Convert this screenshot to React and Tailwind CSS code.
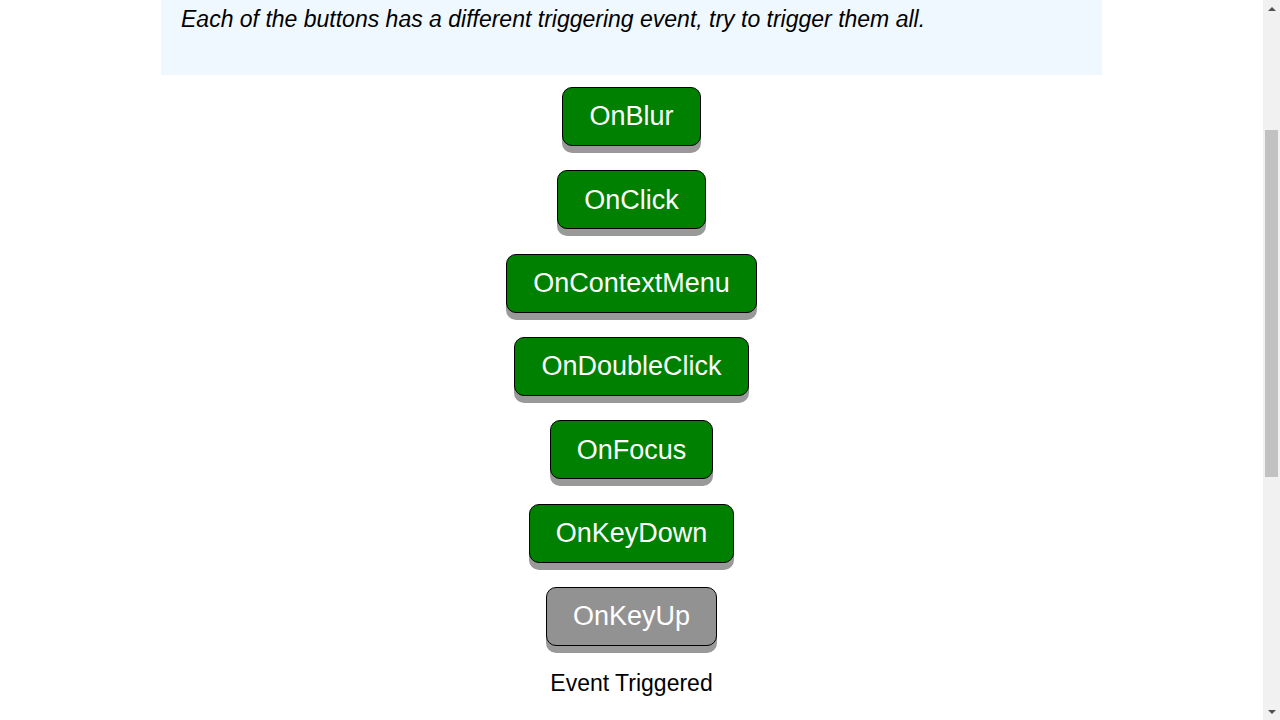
import React, { useState } from 'react';

const events = ['OnBlur', 'OnClick', 'OnContextMenu', 'OnDoubleClick', 'OnFocus', 'OnKeyDown', 'OnKeyUp'];

function Scrollbar() {
  return (
    <div className="fixed right-0 top-0 w-[17px] h-screen bg-[#f1f1f1] flex flex-col items-center">
      <div className="h-[17px] flex items-center justify-center">
        <div className="w-0 h-0 border-l-[4px] border-r-[4px] border-b-[4px] border-l-transparent border-r-transparent border-b-[#505050]" />
      </div>
      <div className="flex-1 w-full px-[2px] pt-[113px]">
        <div className="h-[347px] w-full bg-[#c1c1c1]" />
      </div>
      <div className="h-[17px] flex items-center justify-center">
        <div className="w-0 h-0 border-l-[4px] border-r-[4px] border-t-[4px] border-l-transparent border-r-transparent border-t-[#505050]" />
      </div>
    </div>
  );
}

export default function App() {
  const [triggered, setTriggered] = useState({ OnKeyUp: true });

  const fire = (name) => setTriggered((t) => ({ ...t, [name]: true }));

  return (
    <div className="min-h-screen bg-white text-black font-['Liberation_Sans',Arial,sans-serif]">
      <div className="w-[1263px]">
        <div className="w-[941px] mx-auto bg-[#f0f8ff] px-5 pb-[36px] -mt-[1px]">
          <p className="text-[23px] italic leading-[40px]">
            Each of the buttons has a different triggering event, try to trigger them all.
          </p>
        </div>

        <div className="flex flex-col items-center pt-[12px]">
          {events.map((name) => (
            <button
              key={name}
              onBlur={name === 'OnBlur' ? () => fire(name) : undefined}
              onClick={name === 'OnClick' ? () => fire(name) : undefined}
              onContextMenu={name === 'OnContextMenu' ? (e) => { e.preventDefault(); fire(name); } : undefined}
              onDoubleClick={name === 'OnDoubleClick' ? () => fire(name) : undefined}
              onFocus={name === 'OnFocus' ? () => fire(name) : undefined}
              onKeyDown={name === 'OnKeyDown' ? () => fire(name) : undefined}
              onKeyUp={name === 'OnKeyUp' ? () => fire(name) : undefined}
              className={`mb-[24.34px] h-[59px] px-[26px] rounded-[10px] border border-black text-[27px] text-white shadow-[0_7px_0_#999] ${
                triggered[name] ? 'bg-[#929292]' : 'bg-[#008000]'
              }`}
            >
              {name}
            </button>
          ))}
          <p className="-mt-[2px] text-[23px] leading-[30px]">Event Triggered</p>
        </div>
      </div>
      <Scrollbar />
    </div>
  );
}
